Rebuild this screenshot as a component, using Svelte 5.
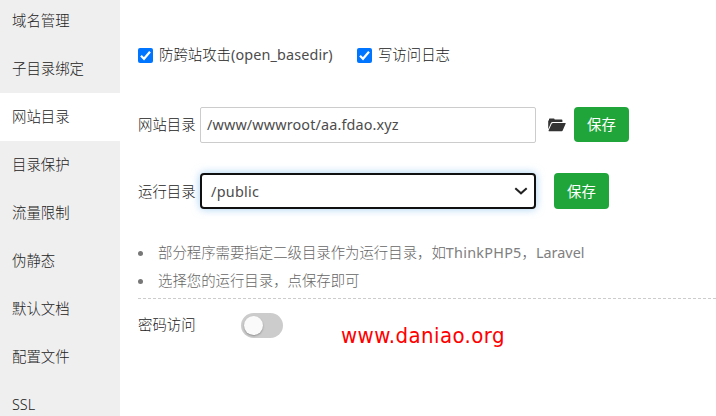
<script>
  const menu = ['域名管理', '子目录绑定', '网站目录', '目录保护', '流量限制', '伪静态', '默认文档', '配置文件', 'SSL'];
  let active = $state(2);
  let crossSite = $state(true);
  let accessLog = $state(true);
  let password = $state(false);
  let path = $state('/www/wwwroot/aa.fdao.xyz');
</script>

{#snippet check(on)}
  <span class="box" class:on>
    {#if on}
      <svg width="15" height="15" viewBox="0 0 15 15"><path d="M3 7.8 6 10.8 12 3.8" fill="none" stroke="#fff" stroke-width="2.2" /></svg>
    {/if}
  </span>
{/snippet}

<div class="page">
  <nav>
    {#each menu as item, i}
      <button class="item" class:active={i === active} onclick={() => (active = i)}>{item}</button>
    {/each}
  </nav>
  <main>
    <div class="checks">
      <button class="check" onclick={() => (crossSite = !crossSite)}>{@render check(crossSite)}<span>防跨站攻击<span class="basedir">(open_basedir)</span></span></button>
      <button class="check" onclick={() => (accessLog = !accessLog)}>{@render check(accessLog)}<span>写访问日志</span></button>
    </div>

    <div class="row site">
      <span class="label">网站目录</span>
      <input bind:value={path} />
      <svg class="folder" width="18" height="14" viewBox="0 0 18 14">
        <path d="M.2 11.2V2.6H1V1.2Q1 .5 1.7.5H5.8Q6.5.5 6.7 1.5H13.6Q14.4 1.5 14.4 2.3V4H4.6Q3.4 4 2.9 5Z" fill="#333" />
        <path d="M5.1 4.9H17.3Q18 4.9 17.7 5.6L14.7 12.5Q14.4 13.2 13.7 13.2H1Q.3 13.2.6 12.5L3.8 5.6Q4.2 4.9 5.1 4.9Z" fill="#333" />
      </svg>
      <button class="save">保存</button>
    </div>

    <div class="row run">
      <span class="label">运行目录</span>
      <div class="select">
        <span class="value">/public</span>
        <svg width="14" height="8" viewBox="0 0 14 8"><path d="M1.3 1.2 7 6.3 12.7 1.2" fill="none" stroke="#222" stroke-width="2" /></svg>
      </div>
      <button class="save">保存</button>
    </div>

    <ul>
      <li>部分程序需要指定二级目录作为运行目录，如<span class="think">ThinkPHP5</span>，<span class="laravel">Laravel</span></li>
      <li>选择您的运行目录，点保存即可</li>
    </ul>

    <div class="row password">
      <span>密码访问</span>
      <button class="switch" class:on={password} aria-label="密码访问" onclick={() => (password = !password)}><i></i></button>
    </div>
    <div class="mark">www.daniao.org</div>
  </main>
</div>

<style>
  :global(body) { margin: 0; overflow: hidden; background: #fff; }
  .page {
    position: relative; display: flex; width: 716px; height: 416px; overflow: hidden;
    font: 300 14.4px/20px "Noto Sans", "Noto Sans CJK SC", sans-serif; color: #222;
  }
  button { font: inherit; color: inherit; border: 0; padding: 0; background: none; text-align: left; white-space: nowrap; }
  nav { flex: none; display: flex; flex-direction: column; width: 120px; margin-top: -3px; background: #efefef; }
  .item { flex: none; height: 48px; padding-left: 12px; }
  .active { background: #fff; }
  main { flex: 1; min-width: 0; padding-left: 18px; }
  .checks { display: flex; gap: 24px; height: 20px; margin-top: 45px; }
  .check { display: flex; align-items: center; gap: 6px; }
  .basedir { display: inline-block; width: 102px; font-weight: 400; letter-spacing: .13px; color: #4c4c4c; }
  .box { display: block; box-sizing: border-box; width: 15px; height: 15px; border: 1px solid #767676; border-radius: 2px; }
  .box.on { border: 0; background: #0075ff; }
  .box svg { display: block; }
  .row { display: flex; align-items: center; }
  .label { flex: none; width: 62px; }
  .site { height: 36px; margin-top: 42px; }
  .run { height: 36px; margin-top: 30px; }
  .run .label, .value { padding-top: 1px; }
  input {
    box-sizing: border-box; width: 336px; height: 36px; padding: 0 6px 2px; border: 1px solid #ccc; border-radius: 2px;
    font: inherit; font-weight: 400; letter-spacing: .14px; color: #4c4c4c; outline: none; background: #fff;
  }
  .value { font-weight: 400; letter-spacing: .28px; color: #4c4c4c; }
  .folder { margin: 0 8px 0 12px; }
  .save { width: 55px; height: 35px; margin-bottom: 1px; border-radius: 4px; background: #20a53a; color: #fff; text-align: center; font-weight: 400; }
  .run .save { height: 36px; margin-bottom: 0; padding-top: 1px; }
  .select {
    box-sizing: border-box; display: flex; align-items: center; justify-content: space-between; width: 336px; height: 36px;
    margin-right: 18px; padding: 0 6px 0 9px; border: 2px solid #101010; border-radius: 4px; box-shadow: 0 0 8px rgba(102, 175, 233, .6);
  }
  ul { margin: 30px 0 0; padding: 0 0 3px; list-style: none; color: #666; border-bottom: 1px dashed #ccc; }
  li { display: flex; align-items: center; height: 28px; white-space: nowrap; }
  li::before { content: ""; width: 5px; height: 5px; margin-right: 15px; border-radius: 50%; background: #777; }
  .think, .laravel { font-weight: 400; color: #808080; }
  .think { letter-spacing: .25px; }
  .password { height: 26px; margin-top: 13px; }
  .switch { box-sizing: border-box; width: 42px; height: 25px; margin-left: 45px; padding: 3px; border-radius: 13px; background: #ccc; }
  .switch i { display: block; width: 19px; height: 19px; border-radius: 50%; background: #fafafa; box-shadow: 0 1px 2px rgba(0, 0, 0, .3); }
  .switch.on { background: #20a53a; }
  .switch.on i { margin-left: 17px; }
  .mark { position: absolute; left: 341px; top: 321px; font: 400 22px/30px "DejaVu Sans Condensed", "DejaVu Sans", sans-serif; font-stretch: condensed; letter-spacing: .42px; color: #f00; }
</style>
